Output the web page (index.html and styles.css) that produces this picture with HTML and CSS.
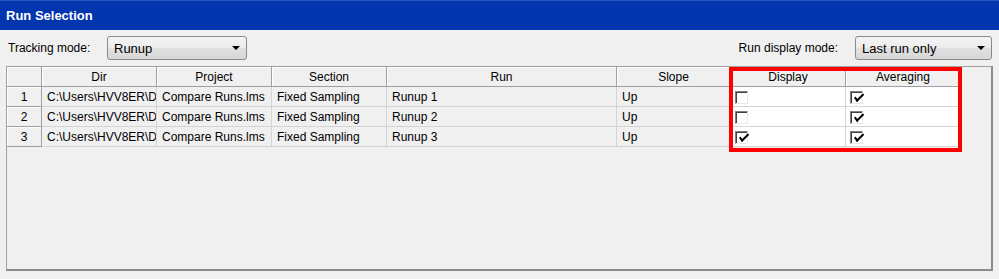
FILE: index.html
```html
<!DOCTYPE html>
<html lang="en">
<head>
    <meta charset="UTF-8">
    <meta name="viewport" content="width=device-width, initial-scale=1.0">
    <title>Run Selection</title>
    <link rel="stylesheet" href="styles.css">
</head>
<body>
    <div class="window">
        <div class="titlebar">Run Selection</div>
        <div class="toolbar">
            <span class="label">Tracking mode:</span>
            <div class="combo combo-tracking">
                <span>Runup</span>
                <span class="arrow"></span>
            </div>
            <span class="label label-display">Run display mode:</span>
            <div class="combo combo-display">
                <span>Last run only</span>
                <span class="arrow"></span>
            </div>
        </div>
        <div class="grid-frame">
            <table class="grid">
                <colgroup>
                    <col class="c-num">
                    <col class="c-std">
                    <col class="c-std">
                    <col class="c-std">
                    <col class="c-run">
                    <col class="c-slope">
                    <col class="c-std">
                    <col class="c-std">
                </colgroup>
                <thead>
                    <tr>
                        <th></th>
                        <th>Dir</th>
                        <th>Project</th>
                        <th>Section</th>
                        <th>Run</th>
                        <th>Slope</th>
                        <th>Display</th>
                        <th>Averaging</th>
                    </tr>
                </thead>
                <tbody>
                    <tr>
                        <th>1</th>
                        <td class="dir">C:\Users\HVV8ER\D</td>
                        <td>Compare Runs.lms</td>
                        <td>Fixed Sampling</td>
                        <td>Runup 1</td>
                        <td>Up</td>
                        <td class="check"><span class="box"></span></td>
                        <td class="check"><span class="box checked"></span></td>
                    </tr>
                    <tr>
                        <th>2</th>
                        <td class="dir">C:\Users\HVV8ER\D</td>
                        <td>Compare Runs.lms</td>
                        <td>Fixed Sampling</td>
                        <td>Runup 2</td>
                        <td>Up</td>
                        <td class="check"><span class="box"></span></td>
                        <td class="check"><span class="box checked"></span></td>
                    </tr>
                    <tr>
                        <th>3</th>
                        <td class="dir">C:\Users\HVV8ER\D</td>
                        <td>Compare Runs.lms</td>
                        <td>Fixed Sampling</td>
                        <td>Runup 3</td>
                        <td>Up</td>
                        <td class="check"><span class="box checked"></span></td>
                        <td class="check"><span class="box checked"></span></td>
                    </tr>
                </tbody>
            </table>
            <div class="highlight"></div>
        </div>
    </div>
</body>
</html>
```

FILE: styles.css
```css
body {
    margin: 0;
    padding: 0;
    background-color: #f0f0f0;
    font-family: "Liberation Sans", Arial, sans-serif;
    font-size: 12px;
    color: #000;
}
.window {
    width: 999px;
    height: 279px;
    background-color: #f0f0f0;
}
.titlebar {
    height: 30px;
    line-height: 30px;
    padding-left: 6px;
    background-color: #0335ae;
    border-top: 1px solid #2a55c0;
    box-sizing: border-box;
    color: #fff;
    font-weight: bold;
    font-size: 13px;
}
.toolbar {
    display: flex;
    align-items: center;
    height: 36px;
    padding: 0 7px 0 8px;
}
.label {
    width: 99px;
}
.label-display {
    width: auto;
    margin-left: auto;
    margin-right: 17px;
}
.combo {
    display: flex;
    align-items: center;
    justify-content: space-between;
    height: 24px;
    box-sizing: border-box;
    padding: 0 6px 0 6px;
    border: 1px solid #8a8a8a;
    border-radius: 3px;
    background: linear-gradient(#f4f4f4, #ececec 50%, #e0e0e0 51%, #d8d8d8);
    font-size: 13px;
}
.combo-tracking {
    width: 140px;
}
.combo-display {
    width: 137px;
}
.arrow {
    width: 0;
    height: 0;
    border-left: 4px solid transparent;
    border-right: 4px solid transparent;
    border-top: 4px solid #000;
}
.grid-frame {
    position: relative;
    margin: 0 6px;
    height: 205px;
    box-sizing: border-box;
    border-top: 1px solid #a0a0a0;
    border-left: 1px solid #a0a0a0;
    border-right: 2px solid #8c8c8c;
    border-bottom: 2px solid #8c8c8c;
    background-color: #f0f0f0;
}
.grid {
    table-layout: fixed;
    width: 954px;
    border-collapse: separate;
    border-spacing: 0;
}
.c-num { width: 35px; }
.c-std { width: 115px; }
.c-run { width: 230px; }
.c-slope { width: 114px; }
.grid th,
.grid td {
    height: 20px;
    box-sizing: border-box;
    padding: 0 5px;
    white-space: nowrap;
    overflow: hidden;
    font-weight: normal;
}
.grid th {
    text-align: center;
    background-color: #f0f0f0;
    border-right: 1px solid #a0a0a0;
    border-bottom: 1px solid #a0a0a0;
    box-shadow: inset 1px 1px 0 #fff;
}
.grid td {
    text-align: left;
    background-color: #f0f0f0;
    border-right: 1px solid #d4d4d4;
    border-bottom: 1px solid #d4d4d4;
    text-overflow: clip;
}
.grid td.dir {
    padding-right: 0;
}
.grid td.check {
    background-color: #fff;
    padding: 0 4px;
    vertical-align: top;
}
.box {
    display: block;
    position: relative;
    width: 13px;
    height: 13px;
    margin-top: 4px;
    box-sizing: border-box;
    background-color: #fff;
    border-top: 1px solid #808080;
    border-left: 1px solid #808080;
    border-right: 1px solid #e8e8e8;
    border-bottom: 1px solid #e8e8e8;
    box-shadow: inset 1px 1px 0 #404040;
}
.box.checked::after {
    content: "";
    position: absolute;
    top: 6px;
    left: 3px;
    width: 8px;
    height: 3px;
    border-left: 2px solid #000;
    border-bottom: 2px solid #000;
    transform: rotate(-45deg) skewX(-8deg);
    transform-origin: left top;
}
.highlight {
    position: absolute;
    left: 722px;
    top: 0;
    width: 233px;
    height: 85px;
    box-sizing: border-box;
    border: 4px solid #ff0000;
}
```
